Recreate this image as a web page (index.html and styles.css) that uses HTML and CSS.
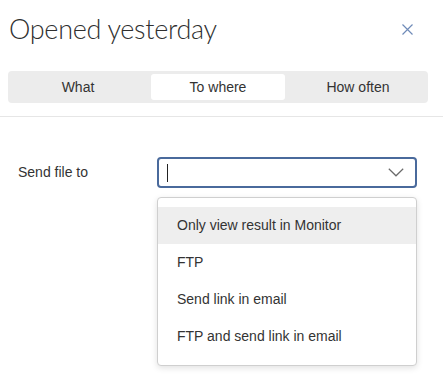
FILE: index.html
```html
<!DOCTYPE html>
<html>
<head>
<meta charset="utf-8">
<link rel="stylesheet" href="styles.css">
</head>
<body>
<div class="dialog">
  <div class="head">
    <div class="titlebar">
      <h1 class="title">Opened yesterday</h1>
      <button class="close" aria-label="Close">
        <svg width="11" height="11" viewBox="0 0 11 11"><path d="M0.5 0.5L10.5 10.5M10.5 0.5L0.5 10.5" stroke="#6f8bb8" stroke-width="1.2" fill="none"/></svg>
      </button>
    </div>
    <div class="tabs">
      <div class="tab">What</div>
      <div class="tab active">To where</div>
      <div class="tab">How often</div>
    </div>
  </div>
  <div class="body">
    <div class="row">
      <label class="label">Send file to</label>
      <div class="combo">
        <div class="select">
          <span class="caret"></span>
          <svg class="chev" width="16" height="9" viewBox="0 0 16 9"><path d="M0.8 0.8L8 7.8L15.2 0.8" stroke="#6b6b6b" stroke-width="1.2" fill="none"/></svg>
        </div>
        <ul class="menu">
          <li class="item hover">Only view result in Monitor</li>
          <li class="item">FTP</li>
          <li class="item">Send link in email</li>
          <li class="item">FTP and send link in email</li>
        </ul>
      </div>
    </div>
  </div>
</div>
</body>
</html>
```
FILE: styles.css
```css
* { box-sizing: border-box; }
html, body { margin: 0; padding: 0; background: #fff; }
body {
  font-family: "Liberation Sans", Arial, sans-serif;
  font-size: 14px;
  color: #333;
  width: 443px;
  height: 389px;
  overflow: hidden;
}
.head {
  height: 117px;
  border-bottom: 1px solid #e6e6e6;
  padding: 13px 15px 0 8px;
}
.titlebar {
  display: flex;
  align-items: center;
  justify-content: space-between;
  height: 32px;
}
.title {
  margin: 0 0 0 1px;
  font-family: "Lato", sans-serif;
  font-weight: 300;
  font-size: 27px;
  letter-spacing: -0.3px;
  line-height: 32px;
  color: #2f2f2f;
}
.close {
  border: 0;
  background: none;
  padding: 0;
  margin-right: 15px;
  width: 11px;
  height: 11px;
  display: flex;
}
.tabs {
  margin-top: 26px;
  height: 32px;
  background: #ececec;
  border-radius: 4px;
  padding: 3px 0;
  display: grid;
  grid-template-columns: 1fr 1fr 1fr;
}
.tab {
  display: flex;
  align-items: center;
  justify-content: center;
  font-size: 14px;
  color: #333;
  border-radius: 3px;
  margin: 0 3px;
}
.tab.active { background: #fff; }
.body { padding: 40px 0 0 18px; }
.row { display: flex; align-items: flex-start; }
.label { width: 139px; line-height: 31px; font-size: 14px; color: #333; }
.combo { position: relative; width: 260px; }
.select {
  height: 31px;
  border: 2px solid #4a6a9c;
  border-radius: 4px;
  display: flex;
  align-items: center;
  justify-content: space-between;
  padding: 0 11px 0 8px;
}
.caret { width: 1px; height: 18px; background: #222; }
.chev { display: block; }
.menu {
  position: absolute;
  top: 40px;
  left: 0;
  width: 260px;
  margin: 0;
  padding: 9px 0 10px;
  list-style: none;
  background: #fff;
  border: 1px solid #cfcfcf;
  border-radius: 4px;
  box-shadow: 0 2px 6px rgba(0,0,0,0.12);
}
.item {
  height: 37px;
  line-height: 37px;
  padding-left: 19px;
  font-size: 14px;
  color: #333;
}
.item.hover { background: #eeeeee; }
```
